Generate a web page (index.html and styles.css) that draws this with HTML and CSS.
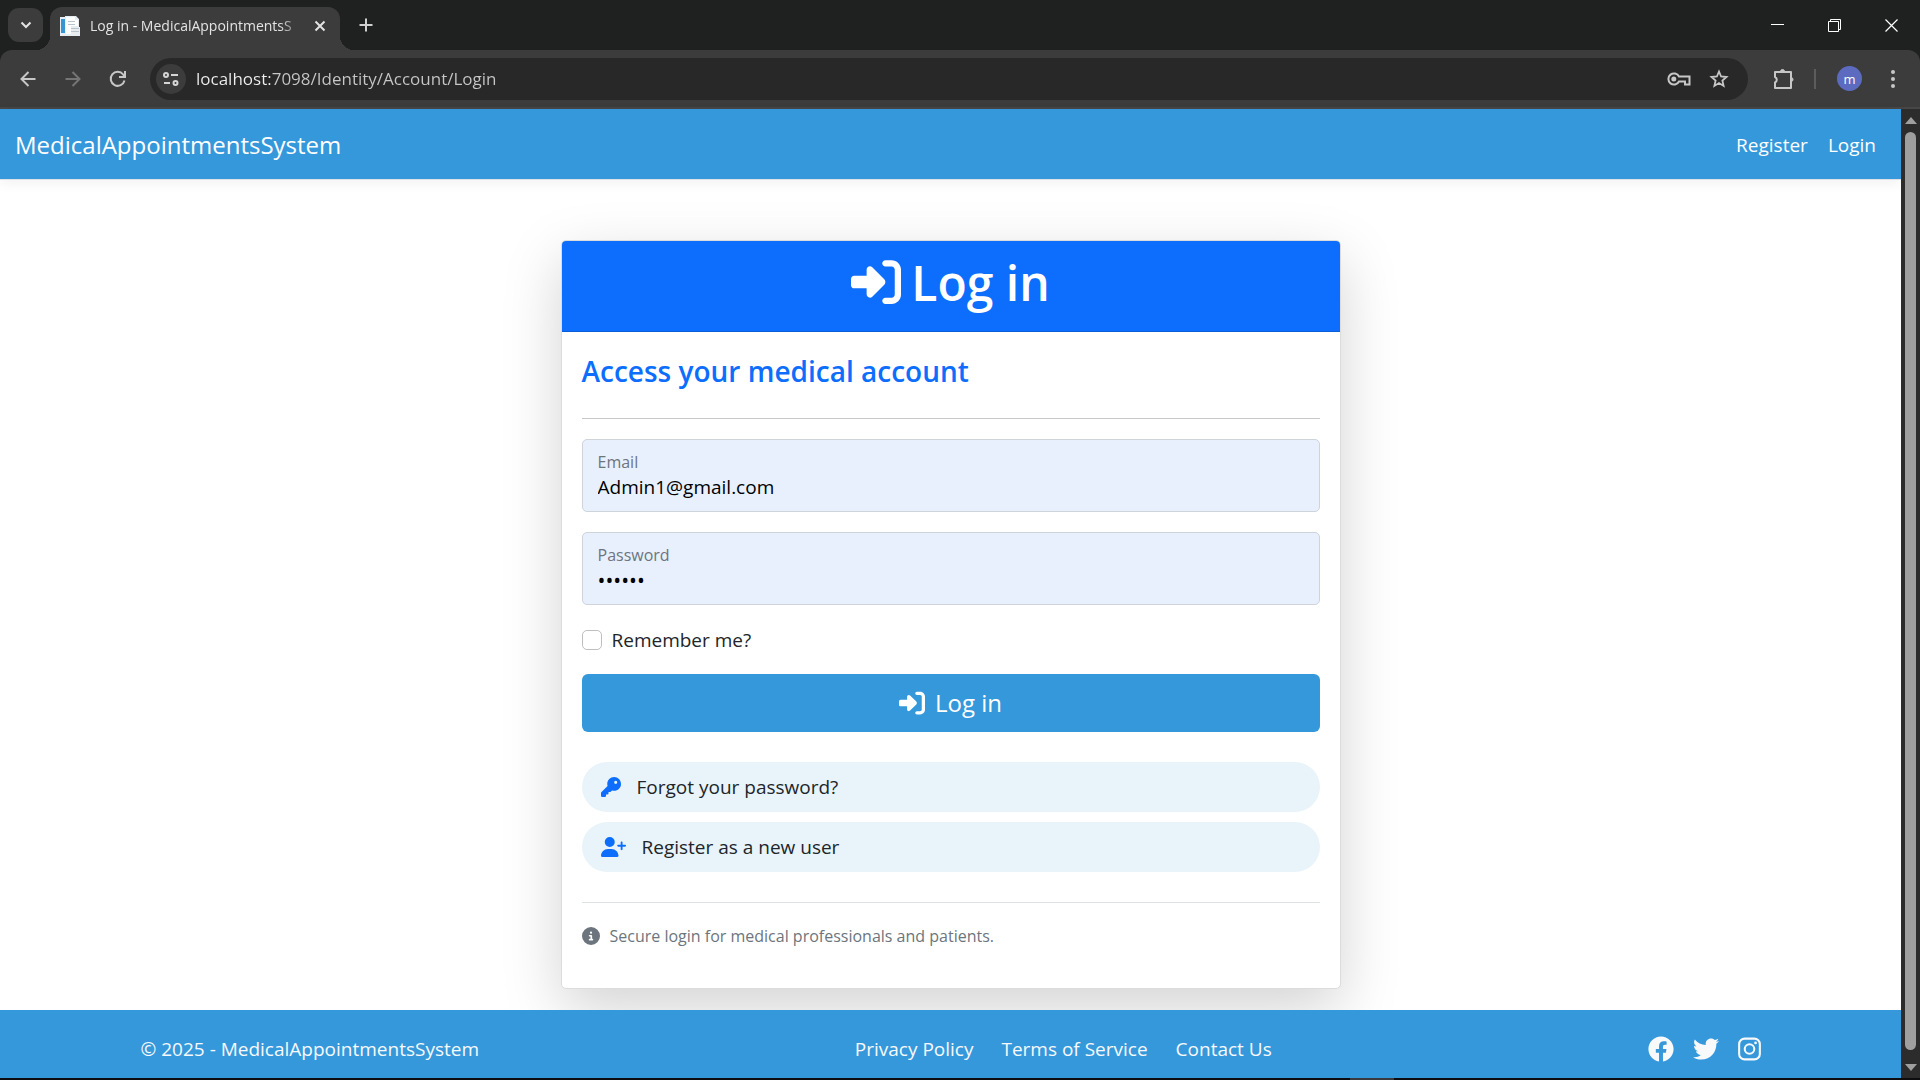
FILE: index.html
```html
<!DOCTYPE html>
<html lang="en">
<head>
<meta charset="utf-8">
<meta name="viewport" content="width=device-width, initial-scale=1">
<title>Log in - MedicalAppointmentsSystem</title>
<link rel="stylesheet" href="styles.css">
</head>
<body>
<svg class="sprite" aria-hidden="true">
  <symbol id="sign-in" viewBox="0 0 512 512"><path d="M217.9 105.9L340.7 228.7c7.2 7.2 11.3 17.1 11.3 27.3s-4.1 20.1-11.3 27.3L217.9 406.1c-6.4 6.4-15 9.9-24 9.9c-18.7 0-33.9-15.2-33.9-33.9l0-62.1L32 320c-17.7 0-32-14.3-32-32l0-64c0-17.7 14.3-32 32-32l128 0 0-62.1c0-18.7 15.2-33.9 33.9-33.9c9 0 17.6 3.6 24 9.9zM352 416l64 0c17.7 0 32-14.3 32-32l0-256c0-17.7-14.3-32-32-32l-64 0c-17.7 0-32-14.3-32-32s14.3-32 32-32l64 0c53 0 96 43 96 96l0 256c0 53-43 96-96 96l-64 0c-17.7 0-32-14.3-32-32s14.3-32 32-32z"/></symbol>
</svg>

<header class="browser">
  <div class="tabstrip">
    <button class="tab-search" aria-label="Search tabs"><svg width="12" height="12" viewBox="0 0 12 12" fill="none" stroke="#e3e3e3" stroke-width="2"><path d="M1.500 3.500 6 8l4.500-4.500"/></svg></button>
    <div class="tab">
      <svg width="20" height="20" viewBox="0 0 20 20"><path fill="#e8edf2" d="M0 1h5V0h11l3 3v8h1v9H0z"/><path fill="#3a94cf" d="M1 3h4v14H1z"/><path fill="#fff" d="M6 1h9v3h3v6h-7v8H6z"/><path stroke="#b9c3cc" d="M8 5.500h7M8 8.500h7M11 12.500h8M11 15.500h8"/></svg>
      <span class="tab-title">Log in - MedicalAppointmentsS</span>
      <button class="tab-close" aria-label="Close tab"><svg width="12" height="12" viewBox="0 0 12 12" stroke="#e3e3e3" stroke-width="2"><path d="M1.500 1.500l9 9M10.500 1.500l-9 9"/></svg></button>
    </div>
    <button class="new-tab" aria-label="New tab"><svg width="14" height="14" viewBox="0 0 14 14" stroke="#d0d0d0" stroke-width="2"><path d="M7 0.500v13M0.500 7h13"/></svg></button>
    <div class="window-controls">
      <button aria-label="Minimize"><svg width="13" height="13" viewBox="0 0 13 13" stroke="#fff"><path d="M0 5.500h13"/></svg></button>
      <button aria-label="Restore"><svg width="13" height="13" viewBox="0 0 13 13" fill="none" stroke="#fff"><path d="M.500 2.500h10v10H.500zM2.500 2.500V.500h10v10h-2"/></svg></button>
      <button aria-label="Close"><svg width="13" height="13" viewBox="0 0 13 13" stroke="#fff" stroke-width="1.200"><path d="M.500.500l12 12M12.500.500l-12 12"/></svg></button>
    </div>
  </div>
  <div class="toolbar">
    <button class="tool" aria-label="Back"><svg width="16" height="16" viewBox="0 0 16 16" fill="none" stroke="#c7c7c7" stroke-width="2"><path d="M15.500 8H2M8.500 1 1.500 8l7 7"/></svg></button>
    <button class="tool" aria-label="Forward"><svg width="16" height="16" viewBox="0 0 16 16" fill="none" stroke="#757575" stroke-width="2"><path d="M.500 8H14M7.500 1l7 7-7 7"/></svg></button>
    <button class="tool" aria-label="Reload"><svg width="18" height="18" viewBox="0 0 18 18" fill="none" stroke="#c7c7c7" stroke-width="2"><path d="M15.500 10.500a7 7 0 1 1-1.300-6L16 6.500M16 1v6h-6"/></svg></button>
    <div class="omnibox">
      <button class="site-info" aria-label="Site information"><svg width="16" height="16" viewBox="0 0 16 16" fill="none" stroke="#d5d5d5" stroke-width="2"><circle cx="3" cy="4" r="2"/><path d="M8 4h7M1 12h6"/><circle cx="12.500" cy="12" r="2"/></svg></button>
      <input class="url" type="text" aria-label="Address" value="localhost:7098/Identity/Account/Login">
      <button class="tool" aria-label="Saved passwords"><svg width="24" height="14" viewBox="0 0 24 14" fill="none" stroke="#c7c7c7" stroke-width="2"><path d="M12 4.500h10.500v8H18v-3h-6a5.600 5.600 0 1 1 0-5z"/><circle cx="6.800" cy="7" r="2.500" fill="#c7c7c7" stroke="none"/></svg></button>
      <button class="tool" aria-label="Bookmark"><svg width="20" height="20" viewBox="0 0 20 20" fill="none" stroke="#c7c7c7" stroke-width="1.800"><path d="M10 2.500l2.100 5 5.400.5-4.100 3.600 1.200 5.300-4.600-2.800-4.600 2.800 1.200-5.300L2.500 8l5.400-.5z"/></svg></button>
    </div>
    <button class="tool" aria-label="Extensions"><svg width="22" height="22" viewBox="0 0 22 22" fill="none" stroke="#c7c7c7" stroke-width="2"><path d="M3 4h16v16H3v-5.500a3 3 0 0 0 0-5.500z" stroke-linejoin="round"/><path d="M8.500 3.500a2 2 0 0 1 4 0zM19 9.500a2 2 0 0 1 0 4z" fill="#c7c7c7" stroke-width="1"/></svg></button>
    <span class="divider"></span>
    <button class="avatar" aria-label="Profile">m</button>
    <button class="tool menu" aria-label="Menu"><svg width="4" height="18" viewBox="0 0 4 18" fill="#c7c7c7"><circle cx="2" cy="2" r="2"/><circle cx="2" cy="9" r="2"/><circle cx="2" cy="16" r="2"/></svg></button>
  </div>
</header>

<div class="viewport">
  <div class="page">
    <nav class="navbar">
      <a class="brand" href="#">MedicalAppointmentsSystem</a>
      <a href="#">Register</a>
      <a href="#">Login</a>
    </nav>

    <main>
      <section class="card">
        <h1><svg class="icon" width="50" height="50"><use href="#sign-in"/></svg>Log in</h1>
        <form class="card-body">
          <h2>Access your medical account</h2>
          <hr>
          <div class="field">
            <label for="email">Email</label>
            <input id="email" type="email" value="Admin1@gmail.com">
          </div>
          <div class="field">
            <label for="password">Password</label>
            <input id="password" type="password" value="secret">
          </div>
          <label class="check"><input type="checkbox">Remember me?</label>
          <button class="submit" type="button"><svg class="icon" width="26" height="26"><use href="#sign-in"/></svg>Log in</button>
          <div class="links">
            <a href="#"><svg class="icon" width="20" height="20" viewBox="0 0 512 512"><path d="M336 352c97.2 0 176-78.8 176-176S433.2 0 336 0S160 78.800 160 176c0 18.700 2.900 36.800 8.300 53.700L7 391c-4.500 4.500-7 10.600-7 17v80c0 13.300 10.700 24 24 24h80c13.300 0 24-10.700 24-24V448h40c13.300 0 24-10.700 24-24V384h40c6.400 0 12.500-2.500 17-7l33.300-33.300c16.900 5.400 35 8.300 53.700 8.300zM376 96a40 40 0 1 1 0 80 40 40 0 1 1 0-80z"/></svg>Forgot your password?</a>
            <a href="#"><svg class="icon" width="25" height="20" viewBox="0 0 640 512"><path d="M96 128a128 128 0 1 1 256 0A128 128 0 1 1 96 128zM0 482.300C0 383.800 79.800 304 178.300 304h91.400C368.200 304 448 383.800 448 482.300c0 16.400-13.300 29.700-29.700 29.700H29.700C13.300 512 0 498.700 0 482.300zM504 312V248H440c-13.300 0-24-10.700-24-24s10.700-24 24-24h64V136c0-13.300 10.700-24 24-24s24 10.700 24 24v64h64c13.300 0 24 10.700 24 24s-10.700 24-24 24H552v64c0 13.300-10.700 24-24 24s-24-10.700-24-24z"/></svg>Register as a new user</a>
          </div>
          <p class="note"><svg class="icon" width="18" height="18" viewBox="0 0 512 512"><path d="M256 512A256 256 0 1 0 256 0a256 256 0 1 0 0 512zM216 336h24V272H216c-13.300 0-24-10.700-24-24s10.700-24 24-24h48c13.300 0 24 10.700 24 24v88h8c13.300 0 24 10.700 24 24s-10.700 24-24 24H216c-13.300 0-24-10.700-24-24s10.700-24 24-24zm40-208a32 32 0 1 1 0 64 32 32 0 1 1 0-64z"/></svg>Secure login for medical professionals and patients.</p>
        </form>
      </section>
    </main>

    <footer class="footer">
      <div class="footer-inner">
        <span>© 2025 - MedicalAppointmentsSystem</span>
        <nav class="footer-links">
          <a href="#">Privacy Policy</a>
          <a href="#">Terms of Service</a>
          <a href="#">Contact Us</a>
        </nav>
        <div class="social">
          <a href="#" aria-label="Facebook"><svg class="icon" width="26" height="26" viewBox="0 0 512 512"><path d="M504 256C504 119 393 8 256 8S8 119 8 256c0 123.780 90.690 226.380 209.250 245V327.690h-63V256h63v-54.640c0-62.150 37-96.480 93.670-96.480 27.140 0 55.520 4.840 55.520 4.840v61h-31.280c-30.800 0-40.410 19.120-40.410 38.730V256h68.780l-11 71.690h-57.780V501C413.310 482.380 504 379.780 504 256z"/></svg></a>
          <a href="#" aria-label="Twitter"><svg class="icon" width="26" height="26" viewBox="0 0 512 512"><path d="M459.370 151.716c.325 4.548.325 9.097.325 13.645 0 138.720-105.583 298.558-298.558 298.558-59.452 0-114.680-17.219-161.137-47.106 8.447.974 16.568 1.299 25.340 1.299 49.055 0 94.213-16.568 130.274-44.832-46.132-.975-84.792-31.188-98.112-72.772 6.498.974 12.995 1.624 19.818 1.624 9.421 0 18.843-1.300 27.614-3.573-48.081-9.747-84.143-51.980-84.143-102.985v-1.299c13.969 7.797 30.214 12.670 47.431 13.319-28.264-18.843-46.781-51.005-46.781-87.391 0-19.492 5.197-37.360 14.294-52.954 51.655 63.675 129.300 105.258 216.365 109.807-1.624-7.797-2.599-15.918-2.599-24.040 0-57.828 46.782-104.934 104.934-104.934 30.213 0 57.502 12.670 76.670 33.137 23.715-4.548 46.456-13.320 66.599-25.340-7.798 24.366-24.366 44.833-46.132 57.827 21.117-2.273 41.584-8.122 60.426-16.243-14.292 20.791-32.161 39.308-52.628 54.253z"/></svg></a>
          <a href="#" aria-label="Instagram"><svg class="icon" width="23" height="26" viewBox="0 0 448 512"><rect x="20" y="52" width="408" height="408" rx="108" fill="none" stroke="currentColor" stroke-width="41"/><circle cx="224" cy="256" r="94" fill="none" stroke="currentColor" stroke-width="41"/><circle cx="343" cy="137" r="27"/></svg></a>
        </div>
      </div>
    </footer>
  </div>
  <div class="scrollbar">
    <svg width="12" height="7" viewBox="0 0 12 7" fill="#9f9f9f"><path d="M6 0l6 7H0z"/></svg>
    <span class="thumb"></span>
    <svg width="12" height="7" viewBox="0 0 12 7" fill="#9f9f9f"><path d="M6 7l6-7H0z"/></svg>
  </div>
</div>
<div class="taskbar-edge"></div>
</body>
</html>
```
FILE: styles.css
```css
* { box-sizing: border-box; }

body {
  margin: 0;
  min-height: 100vh;
  display: flex;
  flex-direction: column;
  background: #fff;
  color: #212529;
  font: 19px/30px "Open Sans", "Noto Sans", sans-serif;
}

a { color: inherit; text-decoration: none; }
button { padding: 0; border: 0; background: none; color: inherit; font: inherit; }
input { font: inherit; color: inherit; }
svg { display: block; flex: none; }
.sprite { width: 0; height: 0; position: absolute; }
.icon { fill: currentColor; }

/* Browser frame */
.browser { background: #1f2120; color: #e3e3e3; }
.tabstrip { display: flex; align-items: center; height: 50px; padding-left: 8px; }
.tab-search {
  display: flex; align-items: center; justify-content: center;
  width: 35px; height: 34px; border-radius: 11px; background: #3c3c3c;
}
.tab {
  position: relative;
  align-self: flex-end;
  display: flex; align-items: center; gap: 10px;
  width: 290px; height: 43px; margin-left: 7px; padding: 0 14px 6px 10px;
  border-radius: 12px 12px 0 0;
  background: #3c3c3c;
  font-size: 14px; line-height: 20px;
}
.tab::before, .tab::after {
  content: ""; position: absolute; bottom: 0; width: 14px; height: 14px;
}
.tab::before { right: 100%; background: radial-gradient(circle at 0 0, transparent 14px, #3c3c3c 14px); }
.tab::after { left: 100%; background: radial-gradient(circle at 100% 0, transparent 14px, #3c3c3c 14px); }
.tab-title {
  flex: 1; white-space: nowrap;
  -webkit-mask-image: linear-gradient(to left, transparent 0, #000 24px);
  mask-image: linear-gradient(to left, transparent 0, #000 24px);
}
.tab-close { margin-left: auto; }
.new-tab { margin-left: 19px; }
.window-controls { display: flex; margin-left: auto; }
.window-controls button { display: flex; align-items: center; justify-content: center; width: 57px; height: 50px; }

.toolbar {
  display: flex; align-items: center;
  height: 59px; padding: 0 2px 0 5px;
  border-bottom: 2px solid #474747;
  border-radius: 12px 12px 0 0;
  background: #3c3c3c;
}
.tool { display: flex; align-items: center; justify-content: center; width: 45px; height: 42px; flex: none; }
.tool.menu { width: 50px; }
.omnibox {
  display: flex; align-items: center; flex: 1;
  height: 42px; margin: 0 12px 0 10px; padding: 0 9px 0 6px;
  border-radius: 21px; background: #282828;
}
.omnibox .tool { width: 40px; }
.site-info { display: flex; align-items: center; justify-content: center; width: 30px; height: 30px; border-radius: 15px; background: #3c3c3c; }
.url {
  flex: 1; min-width: 0; height: 30px; margin-left: 10px; padding: 0; border: 0; outline: 0;
  background: linear-gradient(to right, #f0f0f0 74px, #c7c7c7 74px);
  -webkit-background-clip: text;
  background-clip: text;
  color: transparent;
  font-size: 17px;
}
.divider { width: 2px; height: 20px; margin: 0 21px 0 9px; background: #5c5c5c; }
.avatar { width: 25px; height: 25px; margin-right: 6px; border-radius: 50%; background: #5c6bc0; color: #fff; font-size: 13px; line-height: 22px; }

/* Page area and its scrollbar */
.viewport { flex: 1; display: flex; }
.page { flex: 1; display: flex; flex-direction: column; min-width: 0; }
.scrollbar {
  display: flex; flex-direction: column; align-items: center; gap: 8px;
  width: 19px; padding: 8px 0 7px; background: #2c2c2c;
}
.thumb { flex: 1; width: 11px; margin-bottom: 6px; border-radius: 6px; background: #9f9f9f; }
.taskbar-edge { height: 2px; background: linear-gradient(to right, #0d0d0f 70.3%, #3a3a3c 70.3%, #3a3a3c 72.6%, #0d0d0f 72.6%); }

.navbar {
  display: flex; align-items: center; gap: 20px;
  height: 71px; padding: 2px 25px 0 15px;
  border-bottom: 1px solid #dee2e6;
  box-shadow: 0 3px 12px rgba(0, 0, 0, .06);
  background: #3498db; color: #fff;
}
.brand { margin-right: auto; font-size: 24px; }

main { flex: 1; padding: 60px 20px 20px; }
.card {
  max-width: 780px; margin: 0 auto;
  border: 1px solid #dcdcdc; border-radius: 5px;
  box-shadow: 0 20px 60px rgba(0, 0, 0, .175);
  background: #fff;
}
h1 {
  display: flex; justify-content: center; gap: 10px;
  margin: 0; padding: 12px 20px 18px;
  border-bottom: 1px solid #0b5ed7; border-radius: 4px 4px 0 0;
  background: #0d6efd; color: #fff;
  font-size: 48px; line-height: 60px; font-weight: 600;
}
h1 .icon { margin-top: 4px; }
.card-body { display: flex; flex-direction: column; padding: 21px 20px 37px; }
h2 { margin: 0; color: #0d6efd; font-size: 28px; line-height: 36px; font-weight: 600; }
hr { width: 100%; height: 1px; margin: 29px 0 20px; border: 0; background: #c8c8c8; }

.field {
  display: flex; flex-direction: column;
  height: 73px; margin-bottom: 20px; padding: 11px 15px 0;
  border: 1px solid #ced4da; border-radius: 5px;
  background: #e8f0fe;
}
.field label { color: #6c757d; font-size: 16px; line-height: 22px; }
.field input { width: 100%; height: 28px; padding: 0; border: 0; outline: 0; background: none; color: #000; }
.field input[type="password"] { font-size: 21px; }

.check { display: flex; align-items: center; gap: 10px; }
.check input {
  appearance: none; width: 20px; height: 20px; margin: 0;
  border: 1px solid #bfbfbf; border-radius: 5px; background: #fff;
}
.submit {
  display: flex; align-items: center; justify-content: center; gap: 10px;
  height: 58px; margin: 19px 0 30px; border-radius: 6px;
  background: #3498db; color: #fff; font-size: 24px;
}
.links { display: flex; flex-direction: column; gap: 10px; }
.links a { display: flex; align-items: center; gap: 16px; padding: 10px 19px; border-radius: 25px; background: #e8f4fa; }
.links .icon { color: #0d6efd; }
.note {
  display: flex; align-items: center; gap: 10px;
  margin: 30px 0 0; padding-top: 18px;
  border-top: 1px solid #dee2e6;
  color: #6c757d; font-size: 16px;
}

.footer { position: relative; background: #3498db; color: #f8f9fa; }
.footer-inner {
  display: flex; align-items: center; justify-content: space-between;
  max-width: 1620px; margin: 0 auto; padding: 24px 0 14px;
}
.footer-links { display: flex; gap: 28px; }
.social { display: flex; align-items: center; gap: 19px; }
```
